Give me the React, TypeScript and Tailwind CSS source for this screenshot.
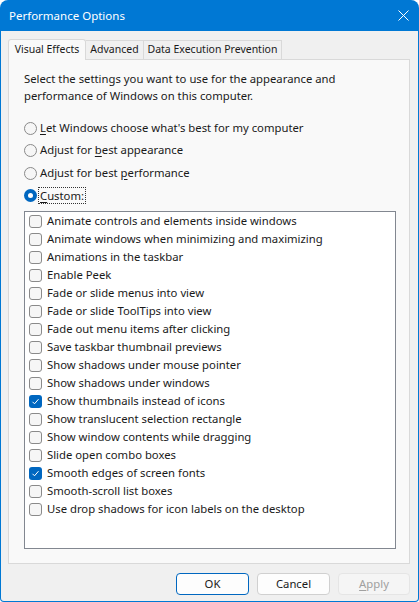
import React from 'react';

const font = { fontFamily: '"Segoe UI", "Noto Sans", sans-serif' };

const effects: { label: string; checked?: boolean }[] = [
  { label: 'Animate controls and elements inside windows' },
  { label: 'Animate windows when minimizing and maximizing' },
  { label: 'Animations in the taskbar' },
  { label: 'Enable Peek' },
  { label: 'Fade or slide menus into view' },
  { label: 'Fade or slide ToolTips into view' },
  { label: 'Fade out menu items after clicking' },
  { label: 'Save taskbar thumbnail previews' },
  { label: 'Show shadows under mouse pointer' },
  { label: 'Show shadows under windows' },
  { label: 'Show thumbnails instead of icons', checked: true },
  { label: 'Show translucent selection rectangle' },
  { label: 'Show window contents while dragging' },
  { label: 'Slide open combo boxes' },
  { label: 'Smooth edges of screen fonts', checked: true },
  { label: 'Smooth-scroll list boxes' },
  { label: 'Use drop shadows for icon labels on the desktop' },
];

function Radio({ selected }: { selected?: boolean }) {
  if (selected) {
    return (
      <span className="w-[13px] h-[13px] rounded-full bg-[#0067c0] flex items-center justify-center shrink-0">
        <span className="w-[5px] h-[5px] rounded-full bg-white" />
      </span>
    );
  }
  return <span className="w-[13px] h-[13px] rounded-full border border-[#8a8a8a] bg-[#f6f6f6] shrink-0" />;
}

function Check({ checked }: { checked?: boolean }) {
  if (checked) {
    return (
      <span className="w-[13px] h-[13px] rounded-[3px] bg-[#0067c0] flex items-center justify-center shrink-0">
        <svg width="9" height="9" viewBox="0 0 9 9" fill="none">
          <path d="M1.5 4.8 L3.5 6.8 L7.5 2.2" stroke="white" strokeWidth="1" />
        </svg>
      </span>
    );
  }
  return <span className="w-[13px] h-[13px] rounded-[3px] border border-[#8a8a8a] bg-[#f6f6f6] shrink-0" />;
}

export default function App() {
  return (
    <div className="w-[419px] h-[602px] bg-white" style={font}>
      <div className="w-full h-full bg-[#0078d4] rounded-t-[8px] rounded-b-[4px] flex flex-col px-[1px] pb-[1px]">
        <div className="h-[31px] flex items-center justify-between pl-[8px] pr-[9px] text-white text-[11.5px]">
          <span>Performance Options</span>
          <svg width="11" height="11" viewBox="0 0 11 11">
            <path d="M0.5 0.5 L10.5 10.5 M10.5 0.5 L0.5 10.5" stroke="white" strokeWidth="1" />
          </svg>
        </div>
        <div className="flex-1 bg-[#f0f0f0] rounded-b-[3px] pl-[7px] pr-[8px] pt-[7px] flex flex-col text-[11.3px] text-[#1a1a1a]">
          <div className="flex items-end h-[21px] text-[10.5px]">
            <div className="h-[21px] w-[78px] bg-[#f9f9f9] border border-b-0 border-[#d9d9d9] rounded-t-[3px] flex items-center justify-center relative z-10 -mb-[1px]">
              Visual Effects
            </div>
            <div className="h-[19px] w-[58px] bg-[#f0f0f0] border border-b-0 border-l-0 border-[#d9d9d9] flex items-center justify-center">
              Advanced
            </div>
            <div className="h-[19px] w-[138px] bg-[#f0f0f0] border border-b-0 border-l-0 border-[#d9d9d9] flex items-center justify-center">
              Data Execution Prevention
            </div>
          </div>
          <div className="h-[505px] bg-[#f9f9f9] border border-[#d9d9d9] pl-[15px] pr-[13px] pt-[10px] flex flex-col">
            <p className="leading-[17px]">
              Select the settings you want to use for the appearance and
              <br />
              performance of Windows on this computer.
            </p>
            <div className="mt-[13px] flex flex-col">
              <div className="h-[22.5px] flex items-center gap-[3px]">
                <Radio />
                <span><span className="underline underline-offset-2">L</span>et Windows choose what's best for my computer</span>
              </div>
              <div className="h-[22.5px] flex items-center gap-[3px]">
                <Radio />
                <span>Adjust for <span className="underline underline-offset-2">b</span>est appearance</span>
              </div>
              <div className="h-[22.5px] flex items-center gap-[3px]">
                <Radio />
                <span>Adjust for best <span className="underline underline-offset-2">p</span>erformance</span>
              </div>
              <div className="h-[22.5px] flex items-center gap-[2px]">
                <Radio selected />
                <span className="outline-1 outline-dotted outline-[#333] leading-[15px] px-[1px]">
                  <span className="underline underline-offset-2">C</span>ustom:
                </span>
              </div>
            </div>
            <div className="mt-[4px] h-[338px] bg-white border border-[#828790] pt-[0px] flex flex-col">
              {effects.map((e) => (
                <div key={e.label} className="h-[18px] flex items-center pl-[4px] gap-[5px]">
                  <Check checked={e.checked} />
                  <span className="leading-[18px]">{e.label}</span>
                </div>
              ))}
            </div>
          </div>
          <div className="flex justify-end gap-[8px] mt-[9px]">
            <button className="w-[73px] h-[22px] rounded-[4px] bg-[#fdfdfd] border border-[#0067c0] text-[11.3px] text-[#1a1a1a]">
              OK
            </button>
            <button className="w-[73px] h-[22px] rounded-[4px] bg-[#fdfdfd] border border-[#d0d0d0] text-[11.3px] text-[#1a1a1a]">
              Cancel
            </button>
            <button className="w-[72px] h-[22px] rounded-[4px] bg-[#f5f5f5] border border-[#e5e5e5] text-[11.3px] text-[#a0a0a0]">
              <span className="underline underline-offset-2">A</span>pply
            </button>
          </div>
        </div>
      </div>
    </div>
  );
}
